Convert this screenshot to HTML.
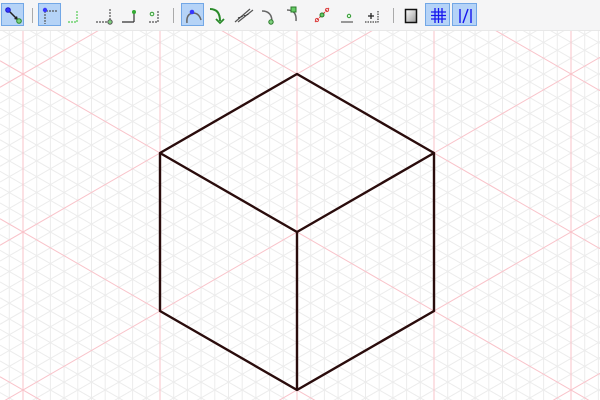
<!DOCTYPE html>
<html><head><style>
html,body{margin:0;padding:0;width:600px;height:400px;overflow:hidden;background:#fff;font-family:"Liberation Sans",sans-serif}
#tb{position:absolute;left:0;top:0;width:600px;height:30px;background:#f5f5f6;border-bottom:1px solid #e8e8e8;overflow:hidden}
.b{position:absolute;top:3px;width:23px;height:23px;box-sizing:border-box}
.s{background:#b5d3f7;border:1px solid #72a7e6}
.sep{position:absolute;top:8px;width:1px;height:15px;background:#aaa}
svg.i{position:absolute;left:0;top:0}
#g{position:absolute;left:0;top:31px;display:block}
</style></head><body>
<div id="tb">
<div class="b s" style="left:1px"><svg class="i" width="23" height="23"><line x1="7" y1="7" x2="14" y2="14" stroke="#222" stroke-width="1.5"/><path d="M12 15 L16 16 L15 12Z" fill="#222"/><circle cx="6" cy="6" r="2.3" fill="#3636ff" stroke="#1a1acc"/><circle cx="17" cy="17" r="2.3" fill="#7fd07f" stroke="#2a8a2a"/></svg></div>
<div class="sep" style="left:32px"></div>
<div class="b s" style="left:38px"><svg class="i" width="23" height="23"><path d="M6 7 V20 M7 7 H18" stroke="#555" stroke-dasharray="2 1" stroke-width="1.2" fill="none"/><circle cx="6" cy="6" r="2.2" fill="#3636ff"/></svg></div>
<svg style="position:absolute;left:62px;top:3px" width="120" height="23"><path d="M15 8 V19 M6 19 H15" stroke="#5c5" stroke-dasharray="2 1" stroke-width="1.2" fill="none"/>
<path d="M48 6 V18 M34 19 H45" stroke="#555" stroke-dasharray="2 1" stroke-width="1.2" fill="none"/><circle cx="48" cy="19" r="2.2" fill="#7fd07f" stroke="#555"/>
<path d="M72 10 V19 M60 19 H72" stroke="#333" stroke-width="1.2" fill="none"/><circle cx="72" cy="9" r="2" fill="#3a3" />
<path d="M96 8 V19 M87 19 H96" stroke="#555" stroke-dasharray="2 1" stroke-width="1.2" fill="none"/><circle cx="90" cy="11" r="1.8" fill="#dfd" stroke="#393"/></svg>
<div class="sep" style="left:173px"></div>
<div class="b s" style="left:181px"><svg class="i" width="23" height="23"><path d="M5 19 Q4 10 11 9 Q17 9 19 16" stroke="#666" stroke-width="1.5" fill="none"/><circle cx="10" cy="8" r="2.3" fill="#3636ff"/></svg></div>
<svg style="position:absolute;left:205px;top:3px" width="190" height="23"><path d="M5 6 Q15 6 15 18" stroke="#2a8a2a" stroke-width="2" fill="none"/><path d="M11 16 L15 20 L19 16" stroke="#2a8a2a" stroke-width="1.8" fill="none"/>
<path d="M30 19 L45 6 M33 19 L48 7" stroke="#555" stroke-width="1.2"/><line x1="33" y1="15" x2="44" y2="11" stroke="#333" stroke-dasharray="2 1"/>
<path d="M57 8 Q67 8 67 19" stroke="#666" stroke-width="1.5" fill="none"/><circle cx="66" cy="19" r="2.2" fill="#7fd07f" stroke="#2a7a2a"/>
<path d="M82 7 Q92 7 91 18" stroke="#666" stroke-width="1.5" fill="none"/><rect x="86" y="4" width="5" height="5" fill="#6c6" stroke="#2a7a2a"/>
<path d="M110 19 L124 5" stroke="#d44" stroke-width="1.2" stroke-dasharray="2 1"/><circle cx="117" cy="12" r="2" fill="#6c6" stroke="#2a7a2a"/><circle cx="112" cy="17" r="1.6" fill="none" stroke="#d44"/><circle cx="122" cy="7" r="1.6" fill="none" stroke="#d44"/>
<path d="M136 19 H148" stroke="#666" stroke-width="1.3"/><circle cx="144" cy="13" r="1.7" fill="#dfd" stroke="#393"/>
<path d="M160 19 H173 M173 8 V20" stroke="#444" stroke-dasharray="1.5 1" stroke-width="1.2"/><path d="M163 13 H169 M166 10 V16" stroke="#222" stroke-width="1.3"/></svg>
<div class="sep" style="left:393px"></div>
<svg style="position:absolute;left:404px;top:8px" width="16" height="16"><defs><linearGradient id="lg" x1="0" y1="0" x2="1" y2="1"><stop offset="0" stop-color="#fff"/><stop offset="1" stop-color="#999"/></linearGradient></defs><rect x="1.5" y="1.5" width="11" height="13" fill="url(#lg)" stroke="#111" stroke-width="1.5"/></svg>
<div class="b s" style="left:425px;width:25px"><svg class="i" width="25" height="23"><path d="M9 4 V19 M12.5 4 V19 M16 4 V19 M5 8 H20 M5 11.5 H20 M5 15 H20" stroke="#1616ee" stroke-width="1.3"/></svg></div>
<div class="b s" style="left:452px;width:25px"><svg class="i" width="25" height="23"><path d="M7 5 V19 M18 5 V19 M10 19 L15 5" stroke="#1616ee" stroke-width="1.4"/></svg></div>
</div>
<svg id="g" width="600" height="369" viewBox="0 31 600 369"></svg>
<script>
var s=document.getElementById('g'),h='';
var x0=297,y0=74,dx=13.7,dy=15.8;
var sl=7.9/13.7;
function L(a,b,c,d,col,w){h+='<line x1="'+a+'" y1="'+b+'" x2="'+c+'" y2="'+d+'" stroke="'+col+'" stroke-width="'+w+'"/>';}
var fine='#ececec',red='#f9c3ca';
for(var k=-30;k<=30;k++){var x=x0+k*dx;if(x<-1||x>601)continue;var m=((k%10)+10)%10==0;if(!m)L(x,31,x,400,fine,1);}
for(var k=-80;k<=80;k++){var yy=y0+k*dy;var m=((k%10)+10)%10==0;
 if(!m){L(0,yy+x0*sl,600,yy-(600-x0)*sl,fine,1);L(0,yy-x0*sl,600,yy+(600-x0)*sl,fine,1);}}
for(var k=-30;k<=30;k+=10){var x=x0+k*dx;if(x<-1||x>601)continue;L(x,31,x,400,red,1);}
for(var k=-80;k<=80;k+=10){var yy=y0+k*dy;L(0,yy+x0*sl,600,yy-(600-x0)*sl,red,1);L(0,yy-x0*sl,600,yy+(600-x0)*sl,red,1);}
h+='<path d="M297 74 L434 153 L434 311 L297 390 L160 311 L160 153 Z M160 153 L297 232 L434 153 M297 232 V390" fill="none" stroke="#2a0c0c" stroke-width="2.4" stroke-linejoin="round"/>';
s.innerHTML=h;
</script>
</body></html>
